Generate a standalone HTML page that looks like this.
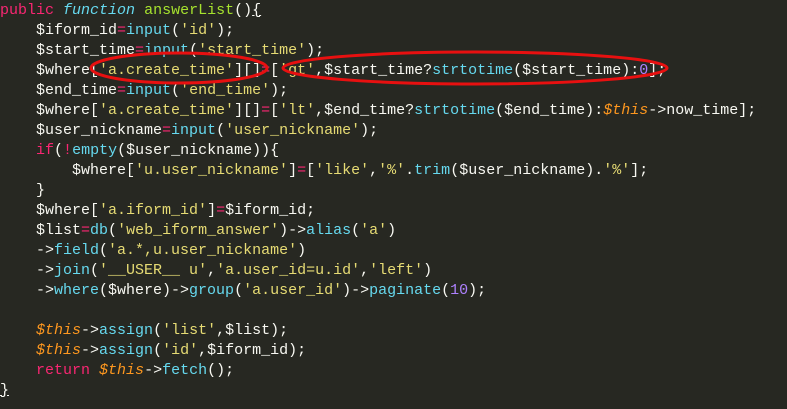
<!DOCTYPE html>
<html><head><meta charset="utf-8"><style>
html,body{margin:0;padding:0;background:#272822;width:787px;height:409px;overflow:hidden}
pre{margin:0;padding:0 0 0 0;font-family:"Liberation Mono",monospace;font-size:15px;line-height:20px;color:#f8f8f2;position:absolute;top:1px;left:0}
.k{color:#f92672}.c{color:#66d9ef}.i{color:#66d9ef;font-style:italic}.g{color:#a6e22e}.s{color:#e6db74}.n{color:#ae81ff}.t{color:#fd971f;font-style:italic}
u{text-decoration:underline}
</style></head><body>
<pre><span class="k">public</span> <span class="i">function</span> <span class="g">answerList</span>()<u>{</u>
    $iform_id<span class="k">=</span><span class="c">input</span>(<span class="s">'id'</span>);
    $start_time<span class="k">=</span><span class="c">input</span>(<span class="s">'start_time'</span>);
    $where[<span class="s">'a.create_time'</span>][]<span class="k">=</span>[<span class="s">'gt'</span>,$start_time?<span class="c">strtotime</span>($start_time):<span class="n">0</span>];
    $end_time<span class="k">=</span><span class="c">input</span>(<span class="s">'end_time'</span>);
    $where[<span class="s">'a.create_time'</span>][]<span class="k">=</span>[<span class="s">'lt'</span>,$end_time?<span class="c">strtotime</span>($end_time):<span class="t">$this</span>-&gt;now_time];
    $user_nickname<span class="k">=</span><span class="c">input</span>(<span class="s">'user_nickname'</span>);
    <span class="k">if</span>(<span class="k">!</span><span class="c">empty</span>($user_nickname)){
        $where[<span class="s">'u.user_nickname'</span>]<span class="k">=</span>[<span class="s">'like'</span>,<span class="s">'%'</span>.<span class="c">trim</span>($user_nickname).<span class="s">'%'</span>];
    }
    $where[<span class="s">'a.iform_id'</span>]<span class="k">=</span>$iform_id;
    $list<span class="k">=</span><span class="c">db</span>(<span class="s">'web_iform_answer'</span>)-&gt;<span class="c">alias</span>(<span class="s">'a'</span>)
    -&gt;<span class="c">field</span>(<span class="s">'a.*,u.user_nickname'</span>)
    -&gt;<span class="c">join</span>(<span class="s">'__USER__ u'</span>,<span class="s">'a.user_id=u.id'</span>,<span class="s">'left'</span>)
    -&gt;<span class="c">where</span>($where)-&gt;<span class="c">group</span>(<span class="s">'a.user_id'</span>)-&gt;<span class="c">paginate</span>(<span class="n">10</span>);

    <span class="t">$this</span>-&gt;<span class="c">assign</span>(<span class="s">'list'</span>,$list);
    <span class="t">$this</span>-&gt;<span class="c">assign</span>(<span class="s">'id'</span>,$iform_id);
    <span class="k">return</span> <span class="t">$this</span>-&gt;<span class="c">fetch</span>();
<u>}</u></pre>
<svg width="787" height="409" style="position:absolute;left:0;top:0">
<ellipse cx="179" cy="68" rx="88" ry="15" fill="none" stroke="#e81010" stroke-width="3"/>
<ellipse cx="475" cy="68" rx="192" ry="16" fill="none" stroke="#e81010" stroke-width="3"/>
</svg>
</body></html>
